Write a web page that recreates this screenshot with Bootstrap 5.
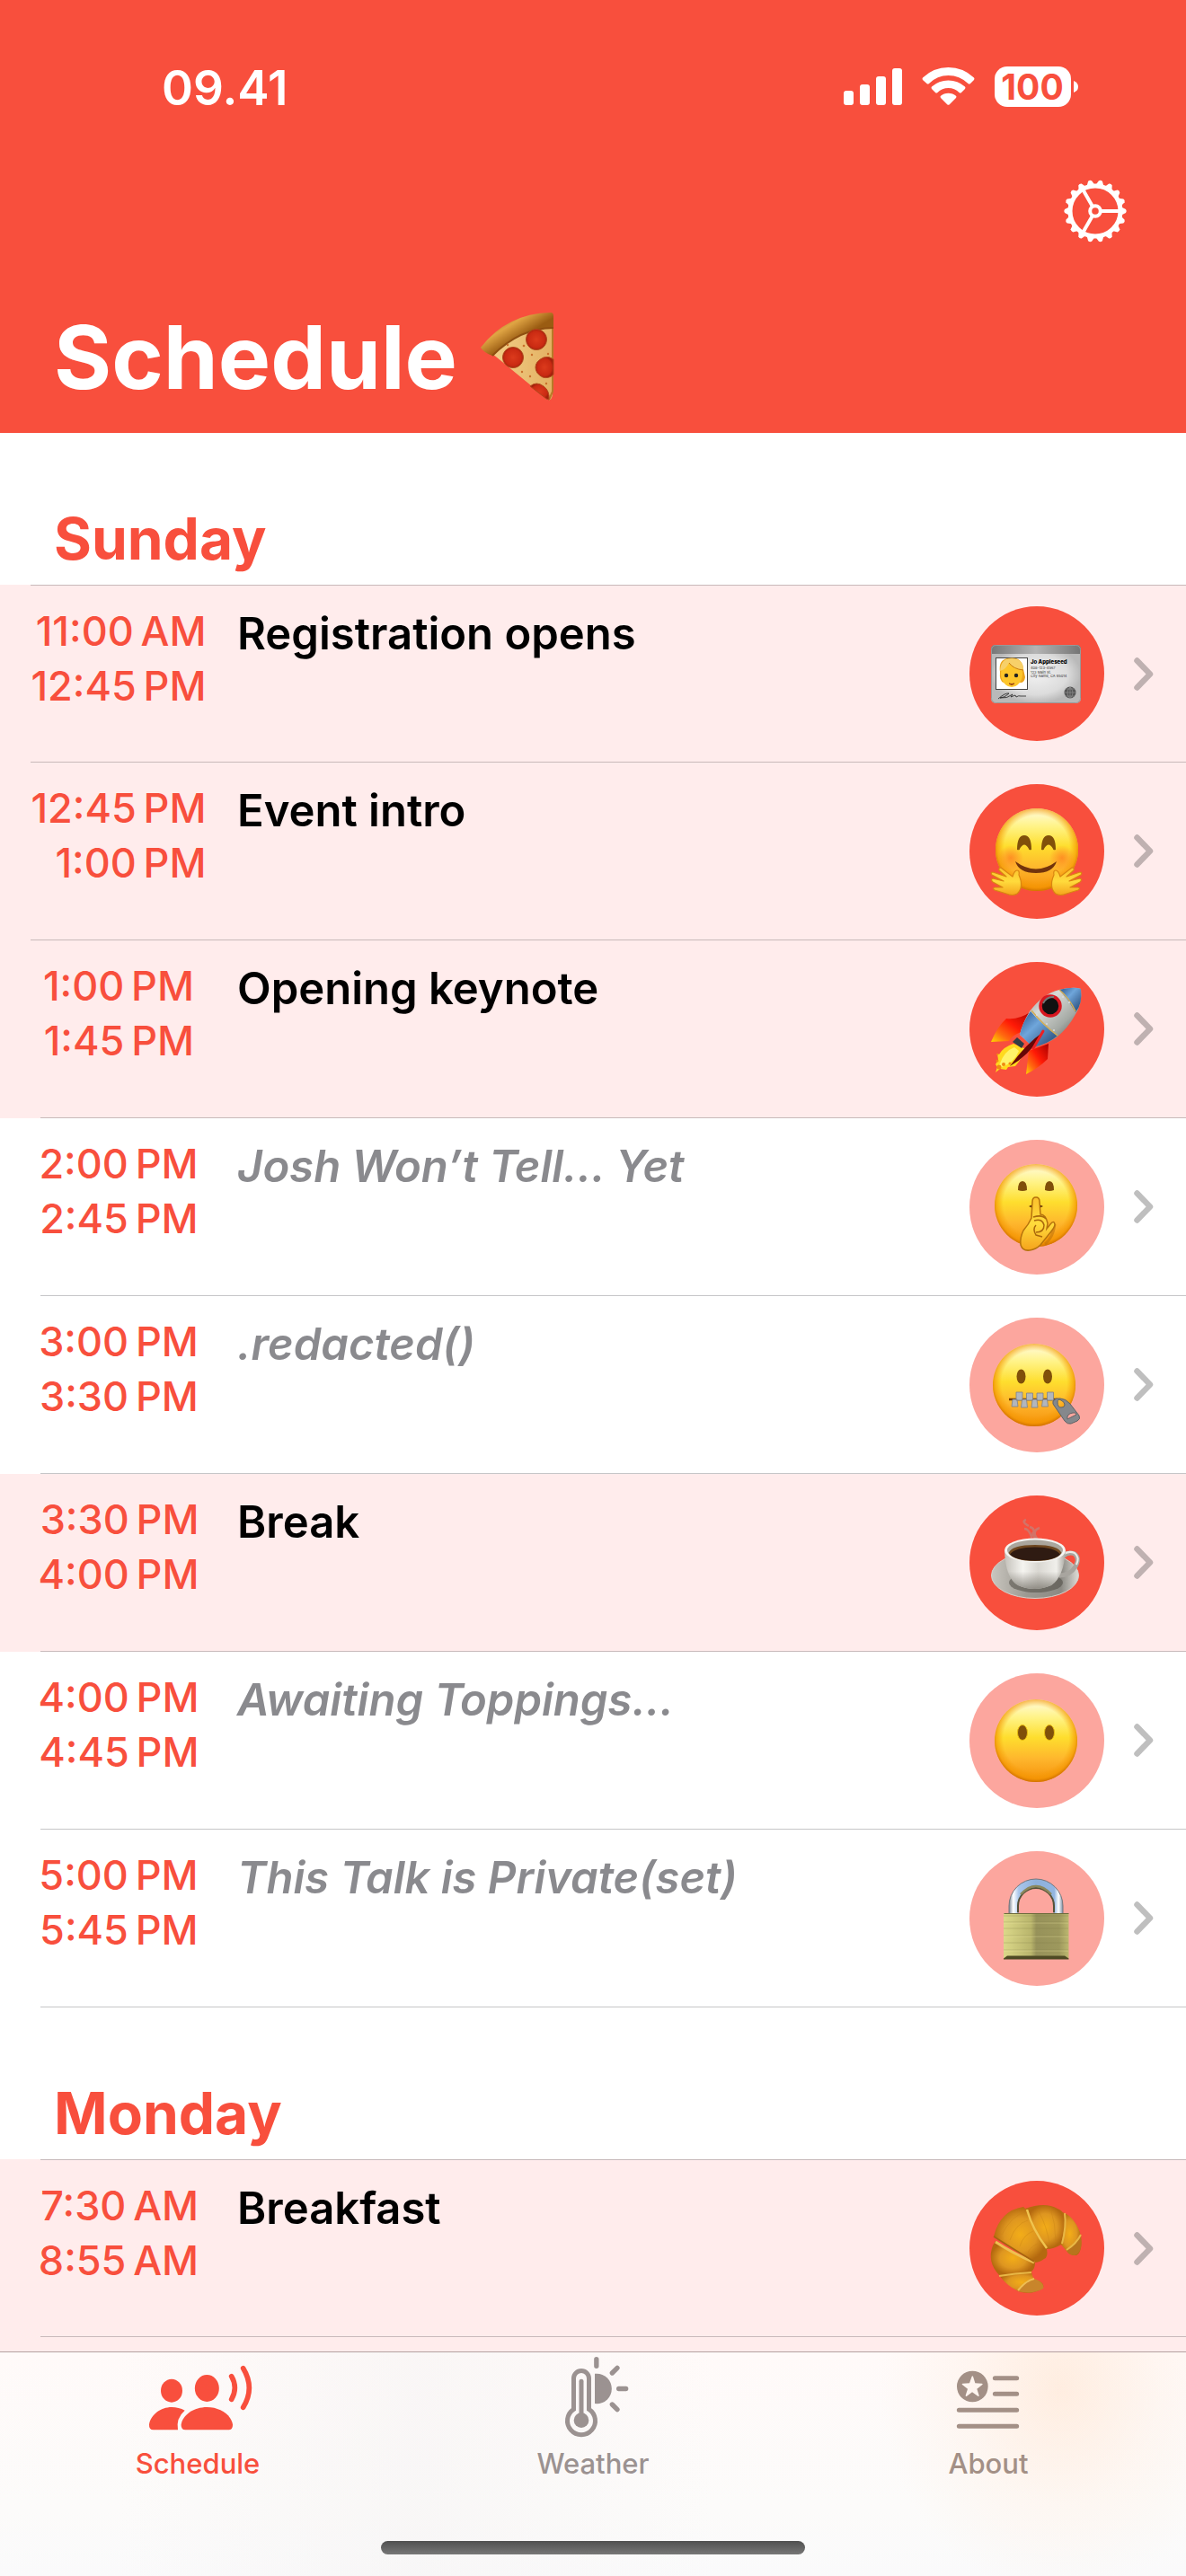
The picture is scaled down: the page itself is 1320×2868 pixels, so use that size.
<!DOCTYPE html>
<html lang="en">
<head>
<meta charset="utf-8">
<meta name="viewport" content="width=device-width, initial-scale=1">
<title>Schedule</title>
<link href="https://cdn.jsdelivr.net/npm/bootstrap@5.3.0/dist/css/bootstrap.min.css" rel="stylesheet">
<style>
:root{--brand:#f84f3d;--tint:#ffecec;--hair:#c6c6c8}
body{font-family:Inter,"Liberation Sans",sans-serif;background:#fff;color:#000}
svg{display:block;flex:none}
.app-header{background:var(--brand);color:#fff;padding:68px 60px 24px}
.status-bar{height:60px;padding:0 60px 0 120px;margin-bottom:71px}
.clock{font-size:53px;line-height:60px;font-weight:600}
.tool-row{height:72px;margin-bottom:67px}
.gear-btn{width:72px;height:72px;margin-right:5px;color:#fff}
.page-title{font-size:98px;line-height:120px;font-weight:700;gap:25px}
.day-title{height:169px;padding:0 60px 11px;font-size:64px;line-height:80px;font-weight:700;color:var(--brand)}
.slot{--inset:45px;padding-left:var(--inset);color:#000;text-decoration:none}
.slot:hover{color:#000}
.slot-wide{--inset:34px}
.slot-open{background:var(--tint);--hair:#c8b9ba}
.slot-body{height:198px;border-bottom:1px solid var(--hair);padding-right:36px}
.slot:first-child .slot-body{border-top:1px solid var(--hair)}
.slot-time{width:calc(2 * (132px - var(--inset)));margin-right:var(--inset);padding-top:20px;font-size:45px;line-height:61px;font-weight:500;color:var(--brand);white-space:nowrap}
.slot-name{padding-top:24px;font-size:49px;line-height:60px;font-weight:600}
.slot-hidden .slot-name{font-style:italic;color:#8a8a8e}
.disc{width:150px;height:150px;background:var(--brand)}
.slot-hidden .disc{background:#fca69e}
.chev{color:rgba(0,0,0,.25);margin-left:33px}
.peek{background:var(--tint);min-height:16px}
.tab-bar{height:250px;border-top:1px solid #b3a1a1;background:radial-gradient(ellipse 200px 230px at 1180px 40px,rgba(255,232,214,.7),rgba(255,236,222,.3) 55%,rgba(255,240,230,0)),linear-gradient(90deg,rgba(246,244,244,0) 10%,rgba(246,244,244,.6) 35%,rgba(255,251,250,0) 60%),linear-gradient(#fffaf9,#fcfbfa 70%,#fafafb)}
.tab-link{padding-top:1px;font-size:31px;line-height:36px;font-weight:500;color:#9b9291}
.tab-link:hover{color:#9b9291}
.tab-link.active{color:var(--brand)}
.tab-link svg{margin-bottom:5px}
.tab-about{color:#a39086}
.home-bar{width:472px;height:15px;margin-bottom:24px;background:linear-gradient(#505050,#777)}
</style>
<script src="https://cdn.jsdelivr.net/npm/bootstrap@5.3.0/dist/js/bootstrap.bundle.min.js"></script>
</head>
<body class="d-flex flex-column min-vh-100">

<!-- shared gradients and shapes -->
<svg width="0" height="0" class="position-absolute" aria-hidden="true">
<defs>
<linearGradient id="skin" x1="0" y1="0" x2="0" y2="1"><stop offset="0" stop-color="#fffbe0"/><stop offset=".22" stop-color="#fff386"/><stop offset=".46" stop-color="#fede2e"/><stop offset=".72" stop-color="#feb62d"/><stop offset="1" stop-color="#f59008"/></linearGradient>
<radialGradient id="rim" cx=".5" cy=".48" r=".52"><stop offset=".76" stop-color="#f59a00" stop-opacity="0"/><stop offset=".92" stop-color="#f39400" stop-opacity=".65"/><stop offset="1" stop-color="#d07000"/></radialGradient>
<radialGradient id="blush"><stop offset="0" stop-color="#ff6a1c" stop-opacity=".6"/><stop offset="1" stop-color="#ff6a1c" stop-opacity="0"/></radialGradient>
<linearGradient id="hand" x1="0" y1="0" x2="0" y2="1"><stop offset="0" stop-color="#fbc02d"/><stop offset=".5" stop-color="#ffdb3c"/><stop offset="1" stop-color="#f5a31c"/></linearGradient>
<linearGradient id="steel" x1="0" y1="0" x2="1" y2="1"><stop offset="0" stop-color="#777"/><stop offset=".35" stop-color="#d8dad6"/><stop offset=".65" stop-color="#a5aaa5"/><stop offset="1" stop-color="#333"/></linearGradient>
<linearGradient id="blue" x1="0" y1="0" x2="1" y2="1"><stop offset="0" stop-color="#28538a"/><stop offset=".4" stop-color="#6fa6db"/><stop offset="1" stop-color="#1e3f6c"/></linearGradient>
<linearGradient id="fin" x1="1" y1="0" x2="0" y2="1"><stop offset="0" stop-color="#a80000"/><stop offset=".45" stop-color="#ff1a06"/><stop offset=".75" stop-color="#ff6a10"/><stop offset="1" stop-color="#ffd800"/></linearGradient>
<linearGradient id="cardtop"><stop offset="0" stop-color="#777"/><stop offset=".5" stop-color="#b4b4b4"/><stop offset="1" stop-color="#747474"/></linearGradient>
<radialGradient id="cardbody"><stop offset="0" stop-color="#f1f1f1"/><stop offset=".7" stop-color="#dcdcdc"/><stop offset="1" stop-color="#b9b9b9"/></radialGradient>
<linearGradient id="cup"><stop offset="0" stop-color="#c4c1ba"/><stop offset=".3" stop-color="#f5f4f0"/><stop offset=".55" stop-color="#d9d7d1"/><stop offset=".85" stop-color="#f0efeb"/><stop offset="1" stop-color="#a9a69f"/></linearGradient>
<linearGradient id="cupshade" x1="0" y1="0" x2="0" y2="1"><stop offset=".55" stop-color="#77736b" stop-opacity="0"/><stop offset="1" stop-color="#77736b" stop-opacity=".75"/></linearGradient>
<linearGradient id="saucer"><stop offset="0" stop-color="#c9c6bf"/><stop offset=".4" stop-color="#9c9992"/><stop offset=".8" stop-color="#8c8a84"/><stop offset="1" stop-color="#dedcd6"/></linearGradient>
<linearGradient id="brass"><stop offset="0" stop-color="#dbd889"/><stop offset=".42" stop-color="#b9b56c"/><stop offset=".5" stop-color="#97925a"/><stop offset=".85" stop-color="#9d985d"/><stop offset="1" stop-color="#bdb870"/></linearGradient>
<linearGradient id="shackle"><stop offset="0" stop-color="#7a8796"/><stop offset=".08" stop-color="#fff"/><stop offset=".18" stop-color="#a9c6ea"/><stop offset=".5" stop-color="#8db0dc"/><stop offset=".84" stop-color="#93b5e0"/><stop offset=".92" stop-color="#fff"/><stop offset="1" stop-color="#7c8ea5"/></linearGradient>
<radialGradient id="bun"><stop offset="0" stop-color="#f3ad18"/><stop offset=".6" stop-color="#de9620"/><stop offset="1" stop-color="#b4690f"/></radialGradient>
<linearGradient id="crust" gradientUnits="userSpaceOnUse" x1="20" y1="8" x2="36" y2="34"><stop offset="0" stop-color="#b1741e"/><stop offset=".4" stop-color="#e0a544"/><stop offset="1" stop-color="#9a5c12"/></linearGradient>
<linearGradient id="cheese"><stop offset="0" stop-color="#f2cf87"/><stop offset="1" stop-color="#e3b062"/></linearGradient>
<radialGradient id="pep"><stop offset="0" stop-color="#dc3a1c"/><stop offset=".8" stop-color="#c92a12"/><stop offset="1" stop-color="#a3200c"/></radialGradient>
<symbol id="face" viewBox="0 0 92 92"><circle cx="46" cy="46" r="46" fill="url(#skin)"/><circle cx="46" cy="46" r="46" fill="url(#rim)"/></symbol>
<symbol id="chev" viewBox="0 0 22 37"><path d="M3.5 3.5 18 18.500 3.500 33.500" fill="none" stroke="currentColor" stroke-width="6.500" stroke-linecap="round" stroke-linejoin="round"/></symbol>
</defs>
</svg>

<header class="app-header">
  <div class="status-bar d-flex justify-content-between align-items-center">
    <div class="clock">09.41</div>
    <svg width="262" height="60" viewBox="0 0 262 60" fill="#fff" aria-label="Signal, Wi-Fi, battery">
      <rect x="1" y="33" width="11" height="16" rx="3"/><rect x="19" y="26" width="11" height="23" rx="3"/><rect x="37" y="17" width="11" height="32" rx="3"/><rect x="55" y="8" width="11" height="41" rx="3"/>
      <g transform="translate(-11 -18)"><path d="M100 39q-1-1.500 0-2.500Q112 25 128.500 25T157 36.500q1 1 0 2.500l-4 4q-1.500 1-2.500 0Q141 34 128.500 34T107 43q-1.500 1-2.500 0zM110 49q-1-1.300 0-2.500 8-7 18.500-7t18.500 7q1 1.200 0 2.500l-4 4q-1.300 1-2.500 0-5-5-12-5t-12 5q-1.300 1-2.500 0zM120 59q-1-1.300 0-2.300 3.500-3 8.500-3t8.500 3q1 1 0 2.300l-7.200 7.200q-1.300 1-2.600 0z"/></g>
      <rect x="169" y="6" width="85" height="45" rx="14"/><path d="M257 22q5 2 5 6.500t-5 6.500z"/>
      <text x="211" y="43" text-anchor="middle" font-size="39" font-weight="700" fill="#f84f3d">100</text>
    </svg>
  </div>
  <div class="tool-row d-flex justify-content-end">
    <button type="button" class="btn gear-btn p-0 border-0" aria-label="Settings">
      <svg width="72" height="72" viewBox="-36 -36 72 72" fill="none" stroke="#fff">
        <circle r="28" stroke-width="5"/><circle r="5.800" stroke-width="4"/>
        <path d="M7 0H27M-3.500 6.060-13.500 23.400M-3.500-6.060-13.500-23.400" stroke-width="4"/>
        <g id="teeth" fill="#fff" stroke="none"></g>
      </svg>
    </button>
  </div>
  <h1 class="page-title d-flex align-items-center m-0">Schedule
    <svg width="84" height="100" viewBox="0 0 84 100" role="img" aria-label="Pizza">
      <path d="M13 45Q45 14 82 14L81 92Q79 100 75 96Z" fill="url(#cheese)"/>
      <path d="M81 14V88l-4 9" fill="none" stroke="#b77a28" stroke-width="2"/>
      <path d="M1 39Q30 1 79 0q3 0 3 4v13Q45 17 14 48 5 45 1 39z" fill="url(#crust)"/>
      <path d="M14 48Q45 17 82 17" fill="none" stroke="#8e4f10" stroke-width="2"/>
      <g fill="url(#pep)" stroke="#b4491c"><circle cx="63" cy="30" r="11.500"/><circle cx="37" cy="50" r="11.500"/><path d="M82 52q-5-4-11-2-9 4-9 11t8 11q7 2 12-3z"/><path d="M56 82q7-6 15 0 7 5 6 15l-3-1z"/></g>
      <g fill="#c9702c"><circle cx="49" cy="37" r="1.300"/><circle cx="47" cy="66" r="1.200"/><circle cx="56" cy="71" r="1.200"/><circle cx="58" cy="47" r="1.200"/><circle cx="76" cy="46" r="1.200"/><circle cx="74" cy="79" r="1.200"/><circle cx="31" cy="36" r="1.200"/></g>
    </svg>
  </h1>
</header>

<main class="flex-grow-1 d-flex flex-column">
  <section>
    <h2 class="day-title d-flex align-items-end m-0">Sunday</h2>
    <div>
      <a href="#" class="slot slot-wide slot-open d-block"><div class="slot-body d-flex align-items-center">
        <div class="slot-time d-flex justify-content-center align-self-start text-end"><div>11:00&#8239;AM<br>12:45&#8239;PM</div></div>
        <div class="slot-name align-self-start flex-grow-1">Registration opens</div>
        <div class="disc rounded-circle"><svg width="150" height="150" viewBox="0 0 150 150">
          <rect x="24" y="43" width="100" height="65" rx="5" fill="url(#cardbody)"/><path d="M24 53v-5q0-5 5-5h90q5 0 5 5v5z" fill="url(#cardtop)"/><rect x="24.500" y="43.500" width="99" height="64" rx="5" fill="none" stroke="#999"/>
          <rect x="29.500" y="57.500" width="35" height="35" fill="#fff" stroke="#444"/>
          <path d="M34 73q-2-13 8-15 17-3 18 12l2 9q-1 6-5 6H38q-5-2-4-12z" fill="#eda61d"/><ellipse cx="47" cy="75" rx="12" ry="15" fill="#fdc62b"/><path d="M34 72q1-15 14-14 12 1 12 13-11-1-16-8-3 7-10 9z" fill="#f7d069"/><path d="M44 63q5 7 16 8" fill="none" stroke="#c87c12"/><circle cx="41" cy="77" r="2.200" fill="#222"/><circle cx="52" cy="77" r="2.200" fill="#222"/><path d="M44 86q3 1 6 0-3 3-6 0z" fill="#9c4410" stroke="#9c4410"/>
          <text x="68" y="64" font-size="6" font-weight="800">Jo Appleseed</text><g font-size="4" fill="#333"><text x="68" y="70">408-123-4567</text><text x="68" y="75">123 Main St.</text><text x="68" y="79">City Name, CA 95014</text></g>
          <path d="M32 103q8-7 12-6-5 5-10 5 8 1 14-4l-2 3 5-2 1 2q3-2 5-1h6" fill="none" stroke="#222" stroke-width=".8"/><circle cx="112" cy="96" r="6.500" fill="#555"/><path d="M106 96h13M112 90v13M107.500 92h9M107.500 100h9M112 90q-6 6 0 13 6-7 0-13" fill="none" stroke="#999" stroke-width=".6"/></svg></div>
        <svg class="chev" width="22" height="37"><use href="#chev"/></svg></div></a>

      <a href="#" class="slot slot-wide slot-open d-block"><div class="slot-body d-flex align-items-center">
        <div class="slot-time d-flex justify-content-center align-self-start text-end"><div>12:45&#8239;PM<br>1:00&#8239;PM</div></div>
        <div class="slot-name align-self-start flex-grow-1">Event intro</div>
        <div class="disc rounded-circle"><svg width="150" height="150" viewBox="0 0 150 150">
          <use href="#face" x="29" y="27" width="92" height="92"/><circle cx="46" cy="82" r="14" fill="url(#blush)"/><circle cx="103" cy="82" r="14" fill="url(#blush)"/>
          <path id="smile-eye" d="M53 73q0-16 8-16t8 16q-3 1-3-1-5-9-10 0 0 2-3 1z" fill="#80500a"/><use href="#smile-eye" x="27"/>
          <path d="M51 86q23 17 46 0-4 13-23 13T51 86z" fill="#72340c"/>
          <g id="hug"><path d="M53 122q-5 3-12 0l-13-4q-3-2 0-3l9 0-11-6q-3-3 0-4l12 3-13-7q-2-3 1-3l15 5-8-7q-1-3 2-3l13 10q2-7 5-7 3 0 2 5 6 14-2 21z" fill="url(#hand)" stroke="#d98510" stroke-width="1.200" stroke-linejoin="round"/></g><use href="#hug" transform="matrix(-1 0 0 1 149 0)"/></svg></div>
        <svg class="chev" width="22" height="37"><use href="#chev"/></svg></div></a>

      <a href="#" class="slot slot-open d-block"><div class="slot-body d-flex align-items-center">
        <div class="slot-time d-flex justify-content-center align-self-start text-end"><div>1:00&#8239;PM<br>1:45&#8239;PM</div></div>
        <div class="slot-name align-self-start flex-grow-1">Opening keynote</div>
        <div class="disc rounded-circle"><svg width="150" height="150" viewBox="0 0 150 150">
          <path d="M69 55Q54 65 41 63 31 72 24 89l20-1q4-7 14-10z" fill="url(#fin)"/><path d="M66 99l22-8-1 17q-10 10-24 17z" fill="url(#fin)"/>
          <path d="M49 91Q37 95 33 103l-2-1 1 7-3 5 2 3-2 6 5-4 7 1 2-3 8-1q9-11 12-19z" fill="#ffd91e"/><path d="M50 95q-11 4-16 18l-3 5 5-1q14-5 19-18" fill="#fff36a"/><g fill="#f08a10"><circle cx="33" cy="117" r="2.500"/><circle cx="38" cy="114" r="2"/><circle cx="31" cy="110" r="1.500"/><circle cx="45" cy="113" r="1.500"/><circle cx="31" cy="103" r="1"/></g>
          <path d="M67 55Q82 35 100 31q16-4 24-1 2 17-7 30-7 13-20 24-10 7-26 11l-15-14q3-13 11-26z" fill="url(#steel)"/>
          <path d="M100 31q16-4 24-1 2 17-6 26-9-15-18-25z" fill="url(#blue)"/><path d="M68 55q12 14 30 27-10 9-27 13L56 81q3-14 12-26z" fill="url(#blue)"/>
          <path d="M69 54q12 15 29 28M100 31q11 9 18 24" stroke="#d3ad54" stroke-width="1.500" fill="none"/>
          <circle cx="90" cy="49" r="11" fill="#111" stroke="#d71720" stroke-width="3.500"/><path d="M82 46q4-8 12-7" stroke="#777" stroke-width="2" fill="none"/>
          <path d="M53 84l8 7-3 5-10-7z" fill="#303c44"/><path d="M82 78Q63 91 45 116q20-11 35-34z" fill="#670606"/><path d="M82 77 71 96" stroke="#ec2022" stroke-width="3" stroke-linecap="round"/><g fill="#ddd"><circle cx="75" cy="59" r="1"/><circle cx="86" cy="69" r="1"/><circle cx="94" cy="76" r="1"/><circle cx="104" cy="39" r="1"/><circle cx="111" cy="45" r="1"/></g></svg></div>
        <svg class="chev" width="22" height="37"><use href="#chev"/></svg></div></a>

      <a href="#" class="slot slot-hidden d-block"><div class="slot-body d-flex align-items-center">
        <div class="slot-time d-flex justify-content-center align-self-start text-end"><div>2:00&#8239;PM<br>2:45&#8239;PM</div></div>
        <div class="slot-name align-self-start flex-grow-1">Josh Won’t Tell... Yet</div>
        <div class="disc rounded-circle"><svg width="150" height="150" viewBox="0 0 150 150">
          <use href="#face" x="28" y="27" width="92" height="92"/><path d="M54 56q0-10 5-10t5 10q-5 2-10 0zM84 56q0-10 5-10t5 10q-5 2-10 0z" fill="#80500a"/>
          <path d="M66 74q8-5 16 0-8 5-16 0z" fill="#5f300a"/><path d="M84 116q9-7 11-22" stroke="#b86c0a" stroke-width="3" fill="none" opacity=".5"/>
          <path d="M70 69q0-5 4-5t4 5l1 14q6 0 8 10l-1 6 4-5q4-5 5 0 0 3-4 8L79 117q-5 5-12 6-8 1-10-6-1-8 3-16 6-7 9-14z" fill="url(#hand)" stroke="#b5720c" stroke-width="1.500"/><path d="M71 86q10-3 14 2M72 90q9-3 11 5 0 8-9 8M74 95q-4 4 0 11l7 2" fill="none" stroke="#aa680c" stroke-width="1.500"/></svg></div>
        <svg class="chev" width="22" height="37"><use href="#chev"/></svg></div></a>

      <a href="#" class="slot slot-hidden d-block"><div class="slot-body d-flex align-items-center">
        <div class="slot-time d-flex justify-content-center align-self-start text-end"><div>3:00&#8239;PM<br>3:30&#8239;PM</div></div>
        <div class="slot-name align-self-start flex-grow-1">.redacted()</div>
        <div class="disc rounded-circle"><svg width="150" height="150" viewBox="0 0 150 150">
          <use href="#face" x="26" y="29" width="92" height="92"/><ellipse cx="57.500" cy="65.500" rx="5" ry="8" fill="#80500a"/><ellipse cx="87" cy="65.500" rx="5" ry="8" fill="#80500a"/>
          <path d="M44 91h54" stroke="#733b08" stroke-width="2.500"/><g fill="#b2b6bc" stroke="#7d8188" stroke-width=".8"><path d="M52 83h7v9h-7zM63.500 84h7v8h-7zM75 84h7v8h-7zM86.500 83h7v9h-7zM48 91h5l1 8h-7zM58.500 91h5l1 9h-7zM70 91h5l1 9h-7zM81.500 91h5l1 8h-7z"/></g>
          <path fill-rule="evenodd" d="M93 93q3-4 8-3 6 0 11 6l10 13q2 4-2 6l-7 3q-4 1-7-3L95 99q-3-3-2-6zm5 1q0 6 4 6t4-3-4-5-4 2zM109 113l10-5q0-3-4-2-7 1-6 7z" fill="#85888c" stroke="#606366"/></svg></div>
        <svg class="chev" width="22" height="37"><use href="#chev"/></svg></div></a>

      <a href="#" class="slot slot-open d-block"><div class="slot-body d-flex align-items-center">
        <div class="slot-time d-flex justify-content-center align-self-start text-end"><div>3:30&#8239;PM<br>4:00&#8239;PM</div></div>
        <div class="slot-name align-self-start flex-grow-1">Break</div>
        <div class="disc rounded-circle"><svg width="150" height="150" viewBox="0 0 150 150">
          <path d="M66 34q-9-5-3-7m4 8q8 2 2 11-3-9-8-9m17-1q-8 3-4 10 5 6 0 13m-4-18q5 8 2 18" fill="none" stroke="#bd8780" stroke-width="2.500" opacity=".65"/>
          <ellipse cx="73" cy="89" rx="48.500" ry="25.500" fill="url(#saucer)" stroke="#d4d1cb"/><ellipse cx="74" cy="97" rx="30" ry="11" fill="#504c46" opacity=".55"/>
          <path d="M104 68q6-6 13-3 6 5 1 14-6 10-18 10" fill="none" stroke="#a8a59f" stroke-width="5"/><path d="M104 66q6-5 13-2 6 5 2 13" fill="none" stroke="#eceae6" stroke-width="2"/>
          <path d="M39 61q1 31 15 39 18 8 37 0 14-9 16-39z" fill="url(#cup)"/><path d="M39 61q1 31 15 39 18 8 37 0 14-9 16-39z" fill="url(#cupshade)"/>
          <ellipse cx="73" cy="61" rx="34" ry="13.500" fill="#f6f5f2"/><ellipse cx="73" cy="61" rx="31" ry="11.500" fill="#aaa69d"/><path d="M43.500 64q4-9 29.500-9t29.500 9q-6 9-29.500 9t-29.500-9z" fill="#6e4720"/><path d="M45 65.500q6-8 28-8t28 8q-7 7-28 7t-28-7z" fill="#2f1b12"/></svg></div>
        <svg class="chev" width="22" height="37"><use href="#chev"/></svg></div></a>

      <a href="#" class="slot slot-hidden d-block"><div class="slot-body d-flex align-items-center">
        <div class="slot-time d-flex justify-content-center align-self-start text-end"><div>4:00&#8239;PM<br>4:45&#8239;PM</div></div>
        <div class="slot-name align-self-start flex-grow-1">Awaiting Toppings...</div>
        <div class="disc rounded-circle"><svg width="150" height="150" viewBox="0 0 150 150">
          <use href="#face" x="28" y="29" width="92" height="92"/><g fill="#80500a" stroke="#e8bd12"><ellipse cx="59" cy="66" rx="5.500" ry="8.500"/><ellipse cx="89" cy="66" rx="5.500" ry="8.500"/></g></svg></div>
        <svg class="chev" width="22" height="37"><use href="#chev"/></svg></div></a>

      <a href="#" class="slot slot-hidden d-block"><div class="slot-body d-flex align-items-center">
        <div class="slot-time d-flex justify-content-center align-self-start text-end"><div>5:00&#8239;PM<br>5:45&#8239;PM</div></div>
        <div class="slot-name align-self-start flex-grow-1">This Talk is Private(set)</div>
        <div class="disc rounded-circle"><svg width="150" height="150" viewBox="0 0 150 150">
          <path d="M44 70V61a30 30 0 0 1 60 0v9H94V61a20 20 0 0 0-40 0v9z" fill="url(#shackle)" stroke="#74777c"/><path d="M54 68v-7a20 20 0 0 1 40 0v7" fill="none" stroke="#555238" stroke-width="2"/><path d="M57 48q17-18 34 0" stroke="#8b875c" stroke-width="2.500" fill="none"/>
          <rect x="38" y="69" width="72.500" height="51" rx="1" fill="url(#brass)"/><path d="M38 72h72M38 79h72M38 86h72M38 94h72M38 102h72M38 110h72" stroke="#797542" opacity=".25"/><path d="M38 80h72M38 95h72M38 111h72" stroke="#fff6b0" opacity=".3"/><path d="M38 119.500l4-3h64l4.500 3v1H38z" fill="#4e4a24"/><path d="M38.500 69.500h72" stroke="#6f6b3c"/></svg></div>
        <svg class="chev" width="22" height="37"><use href="#chev"/></svg></div></a>
    </div>
  </section>

  <section>
    <h2 class="day-title d-flex align-items-end m-0">Monday</h2>
    <div>
      <a href="#" class="slot slot-open d-block"><div class="slot-body d-flex align-items-center">
        <div class="slot-time d-flex justify-content-center align-self-start text-end"><div>7:30&#8239;AM<br>8:55&#8239;AM</div></div>
        <div class="slot-name align-self-start flex-grow-1">Breakfast</div>
        <div class="disc rounded-circle"><svg width="150" height="150" viewBox="0 0 150 150">
          <path d="M103 35q12 3 20 22 4 22-4 26-8 0-12-6l-6-7q-5-22 2-35z" fill="url(#bun)"/><path d="M124 60q3 20-7 23-7 0-9-6 12-6 16-17z" fill="#b8741c"/><path d="M124 60q-5 10-16 17" stroke="#e8b846" stroke-width="2" fill="none"/>
          <path d="M62 31q22-8 36 0 11 4 8 20l-4 20q-8 5-16 5Q69 59 62 31z" fill="url(#bun)"/>
          <path d="M33 105q21-5 36-4 1 6 3 8 12 4 10 10-10 8-25 5-15-6-24-19z" fill="url(#bun)"/><path d="M54 123q10-14 20-13 10 4 8 10-12 7-28 3z" fill="#c8852b"/><path d="M54 122q9-11 18-13" stroke="#eebe55" stroke-width="2" fill="none"/>
          <path d="M29 67q18 13 44 24 0 7-4 10-14 4-36 4-14-15-7-33z" fill="url(#bun)"/>
          <path d="M27 62q7-29 33-33 5 4 8 12 6 15 18 35 2 9-3 11-5 4-11 4Q48 76 27 62z" fill="url(#bun)"/>
          <path d="M64 32q6 22 22 43" fill="none" stroke="#f0c44e" stroke-width="2.500"/><path d="M29 68q18 12 43 23" fill="none" stroke="#efc052" stroke-width="3"/><path d="M33 106q18-3 36-4M106 36q2 15-3 34" fill="none" stroke="#e8b746" stroke-width="2"/><path d="M27 62q22 14 45 28" stroke="#a6640f" fill="none" stroke-width="1.500"/><g stroke="#c98215" fill="none" opacity=".4"><path d="M36 60q10-20 25-25M45 66q6-18 20-22M56 73q4-13 15-17M65 80q3-7 11-10M77 34q9 16 12 36M90 30q6 18 6 38"/></g></svg></div>
        <svg class="chev" width="22" height="37"><use href="#chev"/></svg></div></a>
    </div>
  </section>
  <div class="peek flex-grow-1"></div>
</main>

<footer class="tab-bar d-flex flex-column justify-content-between align-items-center">
  <nav class="nav nav-fill w-100 flex-nowrap" aria-label="Main">
    <a href="#" class="tab-link nav-item active d-flex flex-column align-items-center text-decoration-none w-100" aria-current="page">
      <svg width="140" height="100" viewBox="0 0 420 300" fill="currentColor"><ellipse cx="123" cy="125" rx="36" ry="39"/><ellipse cx="241" cy="117" rx="40.500" ry="45"/><path d="M155 238C160 205 198 180 241 180s81 25 86 58q1 18-14 18H169q-15 0-14-18z"/><path d="M48 238c5-33 39-58 75-58q24 0 44 11-30 26-23 65H62q-15 0-14-18z"/><path d="M323 77q22 38 0 77M362 50q40 66 0 131" fill="none" stroke="currentColor" stroke-width="17" stroke-linecap="round"/></svg>
      Schedule</a>
    <a href="#" class="tab-link nav-item d-flex flex-column align-items-center text-decoration-none w-100">
      <svg width="140" height="100" viewBox="-93 24 420 300" fill="none" stroke="currentColor" stroke-width="15" stroke-linecap="round"><path d="M52.500 211V108a25.500 25.500 0 0 1 51 0v103a46.500 46.500 0 1 1-51 0z"/><path d="M78 118v115"/><circle cx="78" cy="248" r="25" fill="currentColor" stroke="none"/><path d="M123 92h6a50 50 0 0 1 0 101l-6-1z" fill="currentColor" stroke="none"/><path d="M128.500 44v23M198 73l-17 17M203 142.500h24M181 195l17 17" stroke-width="16"/></svg>
      Weather</a>
    <a href="#" class="tab-link tab-about nav-item d-flex flex-column align-items-center text-decoration-none w-100">
      <svg width="140" height="100" viewBox="0 0 420 300" fill="currentColor"><path fill-rule="evenodd" d="M157 59a52 52 0 1 1 0 104 52 52 0 0 1 0-104zm-2 18-8 23-23 1q-4 1-1 4l18 14-7 22q0 4 4 2l18-13 19 13q4 2 4-2l-7-22 18-14q3-3-1-4l-23-1-7-23q-2-3-4 0z"/><path d="M232 83h73M232 136h73M112 190h193M112 244h193" stroke="currentColor" stroke-width="15" stroke-linecap="round"/></svg>
      About</a>
  </nav>
  <div class="home-bar rounded-pill"></div>
</footer>
<script>
// eighteen gear teeth spaced evenly round the rim
const teeth = document.getElementById('teeth');
for (let i = 0; i < 18; i++) {
  const p = document.createElementNS('http://www.w3.org/2000/svg', 'path');
  p.setAttribute('d', 'M29-4.500 34-2q1.500 2 0 4L29 4.500z');
  p.setAttribute('transform', `rotate(${i * 20})`);
  teeth.appendChild(p);
}
</script>
</body>
</html>
